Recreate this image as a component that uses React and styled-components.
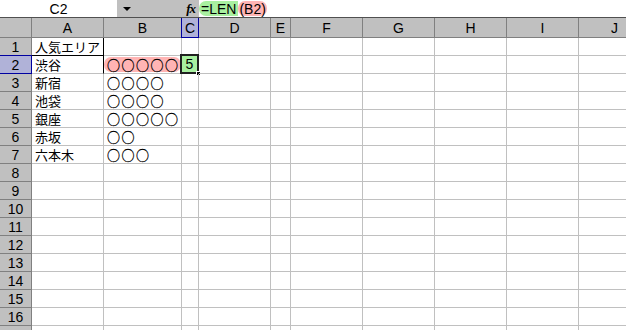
import React from "react";
import styled, { createGlobalStyle } from "styled-components";

const GlobalStyle = createGlobalStyle`
  html, body { margin: 0; padding: 0; background: #fff; }
  body {
    font-family: "Liberation Sans", "Noto Sans CJK JP", sans-serif;
    font-size: 13px;
    color: #000;
    overflow: hidden;
  }
`;

const COLS = [
  { key: "A", w: 72 },
  { key: "B", w: 78 },
  { key: "C", w: 17 },
  { key: "D", w: 72 },
  { key: "E", w: 20 },
  { key: "F", w: 72 },
  { key: "G", w: 72 },
  { key: "H", w: 72 },
  { key: "I", w: 72 },
  { key: "J", w: 72 },
];

const template = `32px ${COLS.map((c) => c.w + "px").join(" ")}`;

const Page = styled.div`
  width: 626px;
  height: 330px;
  overflow: hidden;
`;

const FormulaBar = styled.div`
  display: flex;
  height: 17px;
  border-bottom: 1px solid #505050;
  align-items: stretch;
`;

const NameBox = styled.div`
  width: 117px;
  display: flex;
  align-items: center;
  justify-content: center;
  background: #fff;
  font-size: 14px;
`;

const ToolArea = styled.div`
  width: 82px;
  background: #c0c0c0;
  display: flex;
  align-items: center;
  justify-content: space-between;
  padding: 0 4px 0 6px;
  box-sizing: border-box;
`;

const Arrow = styled.div`
  width: 0;
  height: 0;
  border-left: 4px solid transparent;
  border-right: 4px solid transparent;
  border-top: 4px solid #000;
  margin-top: 1px;
`;

const Fx = styled.span`
  font-family: "Liberation Serif", serif;
  font-style: italic;
  font-weight: bold;
  font-size: 13px;
  letter-spacing: -1px;
`;

const FormulaText = styled.div`
  flex: 1;
  display: flex;
  align-items: center;
  background: #fff;
  font-size: 14px;
`;

const Ref = styled.span`
  display: inline-flex;
  align-items: center;
  height: 15px;
  background: ${(p) => p.$bg};
  border-radius: ${(p) => (p.$left ? "7px 0 0 7px" : "7px")};
  padding: ${(p) => (p.$left ? "0 2px 0 2px" : "0 1px")};
`;

const Grid = styled.div`
  display: grid;
  grid-template-columns: ${template};
  grid-auto-rows: 18px;
  grid-template-rows: 20px;
`;

const ColHead = styled.div`
  box-sizing: border-box;
  background: ${(p) => (p.$sel ? "#b0b2d8" : "#c0c0c0")};
  border-right: 1px solid ${(p) => (p.$sel ? "#0000a0" : "#808080")};
  border-left: ${(p) => (p.$sel ? "1px solid #0000a0" : "none")};
  margin-left: ${(p) => (p.$sel ? "-1px" : "0")};
  border-bottom: 1px solid ${(p) => (p.$sel ? "#0000a0" : "#808080")};
  display: flex;
  align-items: center;
  justify-content: center;
  padding-top: 1px;
  font-size: 14px;
`;

const Corner = styled(ColHead)``;

const RowHead = styled.div`
  box-sizing: border-box;
  background: ${(p) => (p.$sel ? "#b0b2d8" : "#c0c0c0")};
  border-right: 1px solid ${(p) => (p.$sel ? "#0000a0" : "#808080")};
  border-bottom: 1px solid ${(p) => (p.$sel ? "#0000a0" : "#808080")};
  border-top: ${(p) => (p.$sel ? "1px solid #0000a0" : "none")};
  margin-top: ${(p) => (p.$sel ? "-1px" : "0")};
  display: flex;
  align-items: center;
  justify-content: center;
  font-size: 14px;
  padding-top: 1px;
`;

const Cell = styled.div`
  box-sizing: border-box;
  position: relative;
  border-right: 1px solid ${(p) => (p.$edgeR ? "#000" : "#c0c0c0")};
  border-bottom: 1px solid ${(p) => (p.$edgeB ? "#000" : "#c0c0c0")};
  display: flex;
  align-items: center;
  padding-left: 3px;
  white-space: nowrap;
  font-family: "Noto Sans CJK JP", sans-serif;
  font-size: 13px;
  line-height: 1;
  letter-spacing: ${(p) => (p.$circles ? "1.5px" : "0")};
  color: #000;
  -webkit-text-stroke: ${(p) => (p.$circles ? "0.3px #000" : "0")};
`;

const PinkFill = styled.div`
  position: absolute;
  left: 0;
  right: 0;
  top: 1px;
  bottom: 1px;
  background: #ffb4b4;
  border-radius: 7px;
`;

const CellText = styled.span`
  position: relative;
`;

const ActiveBox = styled.div`
  position: absolute;
  left: -2px;
  top: -2px;
  right: -1px;
  bottom: -1px;
  border: 2px solid #202020;
  background: #a8f0a0;
  display: flex;
  align-items: center;
  justify-content: center;
  font-family: "Liberation Sans", sans-serif;
  font-size: 14px;
  -webkit-text-stroke: 0;
  letter-spacing: 0;
`;

const Handle = styled.div`
  position: absolute;
  right: -4px;
  bottom: -4px;
  width: 5px;
  height: 5px;
  background: #000;
  border: 1px solid #fff;
  box-sizing: border-box;
`;

const data = {
  1: { A: "人気エリア" },
  2: { A: "渋谷", B: "○○○○○" },
  3: { A: "新宿", B: "○○○○" },
  4: { A: "池袋", B: "○○○○" },
  5: { A: "銀座", B: "○○○○○" },
  6: { A: "赤坂", B: "○○" },
  7: { A: "六本木", B: "○○○" },
};

export default function App() {
  const rows = Array.from({ length: 17 }, (_, i) => i + 1);
  return (
    <Page>
      <GlobalStyle />
      <FormulaBar>
        <NameBox>C2</NameBox>
        <ToolArea>
          <Arrow />
          <Fx>fx</Fx>
        </ToolArea>
        <FormulaText>
          <Ref $bg="#a8f0a0" $left>=LEN</Ref>
          <Ref $bg="#ffb4b4">(B2)</Ref>
        </FormulaText>
      </FormulaBar>
      <Grid>
        <Corner />
        {COLS.map((c) => (
          <ColHead key={c.key} $sel={c.key === "C"}>
            {c.key}
          </ColHead>
        ))}
        {rows.map((r) => (
          <React.Fragment key={r}>
            <RowHead $sel={r === 2}>{r <= 16 ? r : ""}</RowHead>
            {COLS.map((c) => {
              const v = data[r] && data[r][c.key];
              const isB2 = r === 2 && c.key === "B";
              const isC2 = r === 2 && c.key === "C";
              return (
                <Cell
                  key={c.key}
                  $circles={c.key === "B"}
                  $edgeR={c.key === "A" && (r === 1 || r === 2)}
                  $edgeB={c.key === "A" && r === 1}
                >
                  {isB2 && <PinkFill />}
                  {v && <CellText>{v}</CellText>}
                  {isC2 && (
                    <ActiveBox>
                      5
                      <Handle />
                    </ActiveBox>
                  )}
                </Cell>
              );
            })}
          </React.Fragment>
        ))}
      </Grid>
    </Page>
  );
}
